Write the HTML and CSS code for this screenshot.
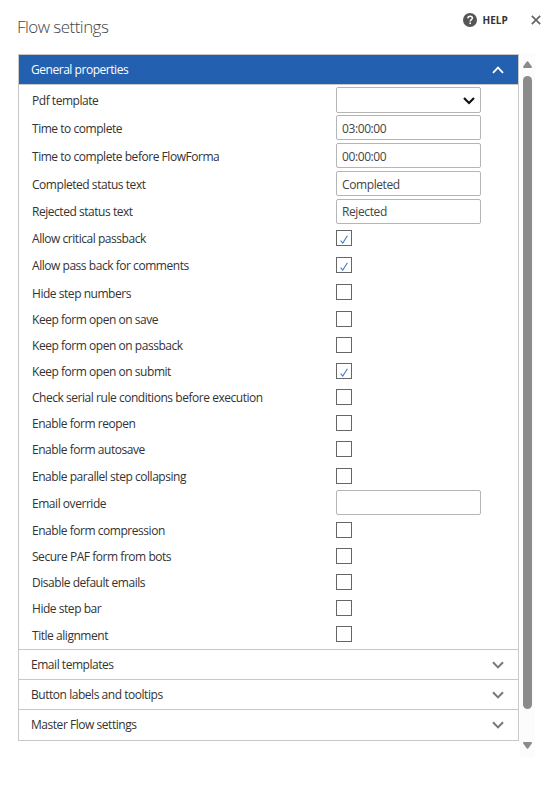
FILE: index.html
```
<!DOCTYPE html>
<html lang="en">
<head>
  <meta charset="UTF-8" />
  <meta name="viewport" content="width=device-width, initial-scale=1.0"/>
  <title>Flow settings</title>

  <link rel="stylesheet" href="styles.css">
</head>
<body>

  <!-- Title bar -->
  <header class="dialog-header">
    <h1>Flow settings</h1>
    <a class="help-link">
      <svg width="14" height="14" viewBox="0 0 14 14">
        <circle cx="7" cy="7" r="7" fill="#555"/>
        <path d="M4.8 5.4C4.9 3.9 5.8 3.2 7.1 3.2C8.5 3.2 9.4 4 9.4 5.1C9.4 6.6 7.2 6.7 7.2 8.4" fill="none" stroke="#fff" stroke-width="1.5"/>
        <rect x="6.4" y="9.5" width="1.6" height="1.6" fill="#fff"/>
      </svg>
      <span>HELP</span>
    </a>
    <button class="close-btn" aria-label="Close">
      <svg width="10" height="10" viewBox="0 0 10 10">
        <path d="M0.8 0.8L9.2 9.2M9.2 0.8L0.8 9.2" fill="none" stroke="#666" stroke-width="1.7"/>
      </svg>
    </button>
  </header>

  <main class="dialog-body">
    <div class="accordion">
      <div class="section-header active">
        <span>General properties</span>
        <svg class="chevron" width="12" height="8" viewBox="0 0 12 8"><path d="M1 6.8L6 1.6L11 6.8"/></svg>
      </div>

      <div class="properties">
        <label class="field" for="pdf">Pdf template</label>
        <div class="select-box">
          <select id="pdf"><option></option></select>
          <svg width="12" height="8" viewBox="0 0 12 8"><path d="M1 1L6 6L11 1"/></svg>
        </div>
        <label class="field" for="time">Time to complete</label>
        <input type="text" id="time" value="03:00:00">
        <label class="field" for="before">Time to complete before FlowForma</label>
        <input type="text" id="before" value="00:00:00">
        <label class="field" for="completed">Completed status text</label>
        <input type="text" id="completed" value="Completed">
        <label class="field short" for="rejected">Rejected status text</label>
        <input type="text" id="rejected" class="short" value="Rejected">

        <label>Allow critical passback</label>
        <span class="check"><svg width="8" height="9" viewBox="0 0 8 9"><path d="M0.6 5.6L2.8 8L7.4 0.8"/></svg></span>
        <label>Allow pass back for comments</label>
        <span class="check"><svg width="8" height="9" viewBox="0 0 8 9"><path d="M0.6 5.6L2.8 8L7.4 0.8"/></svg></span>
        <label class="low">Hide step numbers</label>
        <span class="check"></span>
        <label>Keep form open on save</label>
        <span class="check"></span>
        <label>Keep form open on passback</label>
        <span class="check"></span>
        <label>Keep form open on submit</label>
        <span class="check"><svg width="8" height="9" viewBox="0 0 8 9"><path d="M0.6 5.6L2.8 8L7.4 0.8"/></svg></span>
        <label>Check serial rule conditions before execution</label>
        <span class="check"></span>
        <label>Enable form reopen</label>
        <span class="check"></span>
        <label>Enable form autosave</label>
        <span class="check"></span>
        <label>Enable parallel step collapsing</label>
        <span class="check"></span>
        <label class="field" for="override">Email override</label>
        <input type="text" id="override" value="">
        <label>Enable form compression</label>
        <span class="check"></span>
        <label>Secure PAF form from bots</label>
        <span class="check"></span>
        <label>Disable default emails</label>
        <span class="check"></span>
        <label>Hide step bar</label>
        <span class="check"></span>
        <label class="low">Title alignment</label>
        <span class="check"></span>
      </div>

      <div class="section-header">
        <span>Email templates</span>
        <svg class="chevron" width="12" height="8" viewBox="0 0 12 8"><path d="M1 1.2L6 6.4L11 1.2"/></svg>
      </div>
      <div class="section-header">
        <span>Button labels and tooltips</span>
        <svg class="chevron" width="12" height="8" viewBox="0 0 12 8"><path d="M1 1.2L6 6.4L11 1.2"/></svg>
      </div>
      <div class="section-header">
        <span>Master Flow settings</span>
        <svg class="chevron" width="12" height="8" viewBox="0 0 12 8"><path d="M1 1.2L6 6.4L11 1.2"/></svg>
      </div>
    </div>

    <!-- Scrollbar -->
    <div class="scrollbar">
      <svg width="9" height="7" viewBox="0 0 9 7"><path d="M3.8 0.6Q4.5 -0.2 5.2 0.6L8.8 5.6Q9.2 7 8 7H1Q-0.2 7 0.2 5.6Z"/></svg>
      <div class="thumb"></div>
      <svg width="9" height="7" viewBox="0 0 9 7"><path d="M3.8 6.4Q4.5 7.2 5.2 6.4L8.8 1.4Q9.2 0 8 0H1Q-0.2 0 0.2 1.4Z"/></svg>
    </div>
  </main>

</body>
</html>
```
FILE: styles.css
```
* {
  margin: 0;
  padding: 0;
  box-sizing: border-box;
}

body {
  font-family: "Open Sans", "Noto Sans", sans-serif;
  font-size: 12px;
  letter-spacing: -0.46px;
  color: #333;
  background: #fff;
  overflow: hidden;
}

.dialog-header {
  display: flex;
  height: 53px;
  padding: 0 13px 0 17px;
}

h1 {
  flex: 1;
  font-size: 17px;
  font-weight: 300;
  line-height: 54px;
  letter-spacing: -0.54px;
  color: #444;
}

.help-link {
  display: flex;
  align-items: center;
  gap: 5px;
  height: 40px;
  font-size: 10px;
  font-weight: 700;
  letter-spacing: 0.1px;
}

.close-btn {
  display: flex;
  align-items: center;
  height: 40px;
  margin-left: 23px;
  border: none;
  background: none;
}

.dialog-body {
  display: flex;
  align-items: flex-start;
  gap: 1px;
  padding-left: 18px;
}

.accordion {
  width: 501px;
  margin-top: 1px;
  border: 1px solid #c8c8c8;
}

.section-header {
  display: flex;
  align-items: center;
  justify-content: space-between;
  height: 30px;
  padding: 0 14px 0 12px;
  border-top: 1px solid #c8c8c8;
}

.section-header:last-child {
  height: 31px;
  padding-bottom: 1px;
}

.section-header.active {
  background: #2460b0;
  color: #fff;
  border-top: none;
  border-bottom: 1px solid #c8c8c8;
}

.chevron path {
  fill: none;
  stroke: #777;
  stroke-width: 2;
}

.active .chevron path {
  stroke: #fff;
  stroke-width: 1.8;
}

.properties {
  display: grid;
  grid-template-columns: 304px 145px;
  grid-template-rows: repeat(5, 28px) repeat(3, 27px) repeat(5, 26px) 27px 25px 29px repeat(4, 26px) 27px;
  padding: 1px 0 0 13px;
}

label {
  line-height: 26px;
}

label.low {
  line-height: 28px;
}

label.field {
  line-height: 30px;
}

label.short {
  line-height: 28px;
}

input,
select {
  width: 145px;
  height: 25px;
  margin-top: 1px;
  padding: 2px 5px 0;
  border: 1px solid #b5b5b5;
  border-radius: 2px;
  background: #fff;
  font: inherit;
  letter-spacing: -0.4px;
  color: #444;
}

input.short {
  padding-top: 0;
}

.select-box {
  position: relative;
}

select {
  appearance: none;
  height: 26px;
}

.select-box svg {
  position: absolute;
  top: 11px;
  right: 6px;
}

.select-box path {
  fill: none;
  stroke: #111;
  stroke-width: 2.2;
}

.check {
  display: flex;
  align-items: flex-end;
  width: 16px;
  height: 16px;
  margin-top: 4px;
  padding: 0 0 1px 3px;
  border: 1px solid #666;
}

.check path {
  fill: none;
  stroke: #3d7fc4;
  stroke-width: 1.1;
}

.scrollbar {
  display: flex;
  flex-direction: column;
  align-items: center;
  width: 15px;
  height: 704px;
  padding: 8px 0;
  background: #fcfcfc;
}

.scrollbar path {
  fill: #8b8b8b;
}

.thumb {
  width: 9px;
  height: 633px;
  margin: 8px 0 33px;
  border-radius: 5px;
  background: #8b8b8b;
}
```
